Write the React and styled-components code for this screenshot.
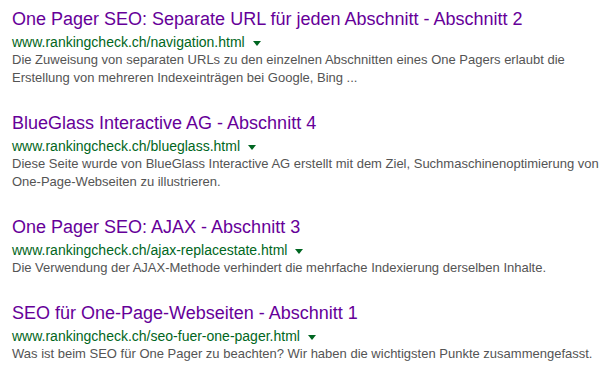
import React from 'react';
import styled, { createGlobalStyle } from 'styled-components';

const results = [
  {
    title: 'One Pager SEO: Separate URL für jeden Abschnitt - Abschnitt 2',
    url: 'www.rankingcheck.ch/navigation.html',
    snippet:
      'Die Zuweisung von separaten URLs zu den einzelnen Abschnitten eines One Pagers erlaubt die Erstellung von mehreren Indexeinträgen bei Google, Bing ...'
  },
  {
    title: 'BlueGlass Interactive AG - Abschnitt 4',
    url: 'www.rankingcheck.ch/blueglass.html',
    snippet:
      'Diese Seite wurde von BlueGlass Interactive AG erstellt mit dem Ziel, Suchmaschinenoptimierung von One-Page-Webseiten zu illustrieren.'
  },
  {
    title: 'One Pager SEO: AJAX - Abschnitt 3',
    url: 'www.rankingcheck.ch/ajax-replacestate.html',
    snippet:
      'Die Verwendung der AJAX-Methode verhindert die mehrfache Indexierung derselben Inhalte.'
  },
  {
    title: 'SEO für One-Page-Webseiten - Abschnitt 1',
    url: 'www.rankingcheck.ch/seo-fuer-one-pager.html',
    snippet:
      'Was ist beim SEO für One Pager zu beachten? Wir haben die wichtigsten Punkte zusammengefasst.'
  }
];

const GlobalStyle = createGlobalStyle`
  html, body {
    margin: 0;
    padding: 0;
    background: #fff;
  }
  body {
    font-family: "Liberation Sans", Arial, sans-serif;
  }
`;

const ResultList = styled.div`
  padding: 8px 0 0 12px;
  width: 592px;
`;

const Result = styled.div`
  margin-bottom: 25px;
`;

const Title = styled.a`
  display: block;
  font-size: 18px;
  line-height: 22px;
  color: #660099;
  text-decoration: none;
  white-space: nowrap;
`;

const UrlRow = styled.div`
  display: flex;
  align-items: center;
  margin-top: 3px;
  height: 18px;
`;

const Url = styled.cite`
  font-style: normal;
  font-size: 14px;
  line-height: 18px;
  color: #006621;
`;

const Arrow = styled.span`
  display: inline-block;
  margin-left: 8px;
  margin-top: 2px;
  border-style: solid;
  border-color: #006621 transparent;
  border-width: 5px 4px 0 4px;
`;

const Snippet = styled.div`
  font-size: 13px;
  line-height: 18px;
  color: #545454;
`;

export default function App() {
  return (
    <>
      <GlobalStyle />
      <ResultList>
        {results.map((r) => (
          <Result key={r.url}>
            <Title href="#">{r.title}</Title>
            <UrlRow>
              <Url>{r.url}</Url>
              <Arrow />
            </UrlRow>
            <Snippet>{r.snippet}</Snippet>
          </Result>
        ))}
      </ResultList>
    </>
  );
}
